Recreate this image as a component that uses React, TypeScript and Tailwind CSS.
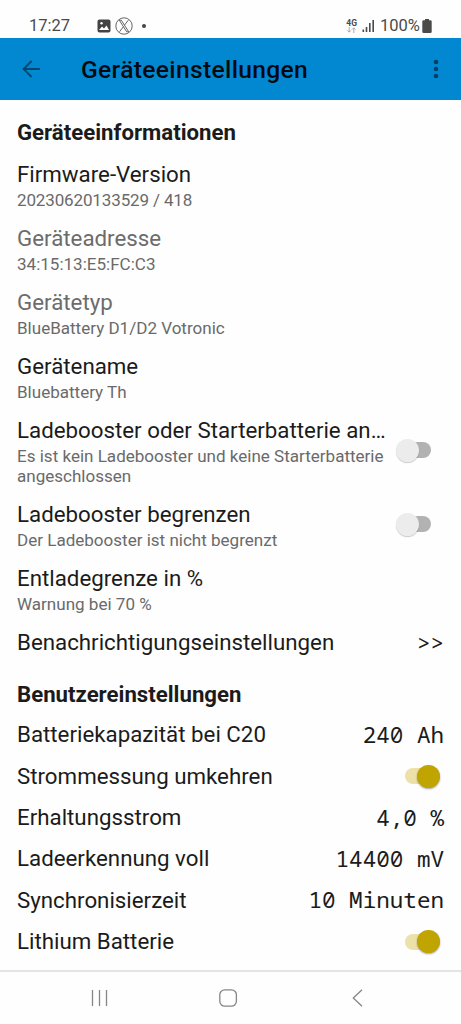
import React from "react";

type InfoItem = {
  title: string;
  summary: string;
  muted?: boolean;
  toggle?: boolean;
  tight?: boolean;
};

type UserItem = {
  title: string;
  value?: string;
};

const infoItems: InfoItem[] = [
  { title: "Firmware-Version", summary: "20230620133529 / 418", tight: true },
  { title: "Geräteadresse", summary: "34:15:13:E5:FC:C3", muted: true },
  { title: "Gerätetyp", summary: "BlueBattery D1/D2 Votronic", muted: true },
  { title: "Gerätename", summary: "Bluebattery Th" },
  {
    title: "Ladebooster oder Starterbatterie an…",
    summary: "Es ist kein Ladebooster und keine Starterbatterie angeschlossen",
    toggle: true,
  },
  { title: "Ladebooster begrenzen", summary: "Der Ladebooster ist nicht begrenzt", toggle: true },
  { title: "Entladegrenze in %", summary: "Warnung bei 70 %" },
];

const userItems: UserItem[] = [
  { title: "Batteriekapazität bei C20", value: "240 Ah" },
  { title: "Strommessung umkehren" },
  { title: "Erhaltungsstrom", value: "4,0 %" },
  { title: "Ladeerkennung voll", value: "14400 mV" },
  { title: "Synchronisierzeit", value: "10 Minuten" },
  { title: "Lithium Batterie" },
];

function Switch({ on = false }: { on?: boolean }) {
  return (
    <div
      role="switch"
      aria-checked={on}
      className={`flex h-4 w-[35px] shrink-0 items-center rounded-full ${
        on ? "justify-end bg-[#ece2a9]" : "bg-linear-to-r from-transparent from-30% to-[#b2b2b2] to-30%"
      }`}
    >
      <div
        className={`size-[23px] shrink-0 rounded-full ${
          on ? "bg-[#c0a400] shadow-[0_1px_2px_rgba(0,0,0,0.35)]" : "bg-[#ececec] shadow-[0_1px_1px_rgba(0,0,0,0.2)]"
        }`}
      />
    </div>
  );
}

function Value({ children }: { children: React.ReactNode }) {
  return (
    <span className="font-['Droid_Sans_Mono','Noto_Sans_Mono','DejaVu_Sans_Mono',monospace] text-[22.6px]">
      {children}
    </span>
  );
}

function StatusBar() {
  return (
    <div className="flex h-[38px] items-end justify-between pr-[28px] pb-[2px] pl-[29px] text-[#4a4a4a]">
      <div className="flex h-5 items-center">
        <span className="w-[68px] text-[16.5px]">17:27</span>
        <svg width="14" height="14" viewBox="0 0 14 14">
          <rect x="0.5" y="0.5" width="13" height="13" rx="2" fill="#444" />
          <path d="M2 11l3-3.5 2 2 2.5-3L12 11z" fill="#fff" />
          <circle cx="4.5" cy="4.2" r="1.2" fill="#fff" />
        </svg>
        <svg className="ml-[4px]" width="18" height="18" viewBox="0 0 18 18" fill="none" stroke="#555" strokeWidth="0.9">
          <circle cx="9" cy="9" r="8.2" />
          <path d="M4.3 3.2h2l7.4 11.6h-2zM13.3 3.2L9.6 8M8.3 9.8l-3.8 5" />
        </svg>
        <span className="ml-[9px] size-1 rounded-full bg-[#444]" />
      </div>
      <div className="flex h-5 items-center">
        <div className="flex flex-col items-center">
          <span className="text-[8.5px] leading-[8px] font-bold">4G</span>
          <svg width="9" height="6" viewBox="0 0 9 6" fill="none" stroke="#999" strokeWidth="0.8">
            <path d="M2.2 0v5M0.5 3.4l1.7 1.8 1.7-1.8M6.8 6V1M5.1 2.6L6.8 0.8l1.7 1.8" />
          </svg>
        </div>
        <svg className="ml-[5px]" width="13" height="14" viewBox="0 0 13 14" fill="#4a4a4a">
          <rect x="0.5" y="10.5" width="1.6" height="2.5" />
          <rect x="3.7" y="8" width="1.6" height="5" />
          <rect x="7" y="4" width="1.6" height="9" />
          <rect x="10.4" y="1" width="1.6" height="12" />
        </svg>
        <span className="ml-[5px] w-[42px] text-[16.5px] whitespace-nowrap">100%</span>
        <svg className="mr-px" width="10" height="14" viewBox="0 0 10 14" fill="#4a4a4a">
          <path d="M3 0h4v1.3h1.4Q9.7 1.3 9.7 2.6v9.9Q9.7 14 8.4 14H1.6Q.3 14 .3 12.5V2.6Q.3 1.3 1.6 1.3H3z" />
        </svg>
      </div>
    </div>
  );
}

function AppBar() {
  return (
    <header className="flex h-[62px] items-center bg-[#0288d1] pr-[22px] pl-[22px]">
      <svg width="19" height="18" viewBox="0 0 19 18" fill="none" stroke="#014a72" strokeWidth="1.9">
        <path d="M18 9H2M9.6 1L1.6 9l8 8" />
      </svg>
      <h1 className="ml-[40px] flex-1 pt-[2px] text-[24.6px] font-medium tracking-[0.34px] text-[#020a10]">
        Geräteeinstellungen
      </h1>
      <svg width="6" height="20" viewBox="0 0 6 20" fill="#014168">
        <circle cx="3" cy="3" r="2.3" />
        <circle cx="3" cy="10" r="2.3" />
        <circle cx="3" cy="17" r="2.3" />
      </svg>
    </header>
  );
}

function NavBar() {
  return (
    <nav className="flex h-[54px] items-center border-t-2 border-[#e4e4e4] pl-[91px]">
      <svg width="17" height="18" viewBox="0 0 17 18" stroke="#858585" strokeWidth="1.3">
        <path d="M1.5 1v16M8.5 1v16M15.5 1v16" />
      </svg>
      <svg className="ml-[110px]" width="20" height="18" viewBox="0 0 20 18" fill="none" stroke="#858585" strokeWidth="1.3">
        <rect x="1.8" y="0.8" width="16.6" height="16.4" rx="5" />
      </svg>
      <svg className="ml-[114px]" width="11" height="18" viewBox="0 0 11 18" fill="none" stroke="#858585" strokeWidth="1.3">
        <path d="M10 0.8L1.3 9l8.7 8.2" />
      </svg>
    </nav>
  );
}

export default function App() {
  return (
    <div className="flex h-[1024px] w-[461px] flex-col overflow-hidden bg-[#fefefe] font-['Roboto',sans-serif] text-[#1b1b1b]">
      <StatusBar />
      <AppBar />

      <main className="flex-1 px-[17px]">
        <h2 className="flex h-[52px] items-center pt-[13px] text-[22.2px] font-bold">Geräteeinformationen</h2>

        {infoItems.map((item) => (
          <div key={item.title} className="flex items-center justify-between py-[6px]">
            <div className={item.toggle ? "w-[372px]" : "w-full"}>
              <div className={`text-[22.3px] leading-8 whitespace-nowrap ${item.muted ? "text-[#6c6c6c]" : ""}`}>
                {item.title}
              </div>
              <div className={`text-[17.05px] leading-5 text-[#6a6a6a] ${item.tight ? "tracking-[-0.15px]" : ""}`}>
                {item.summary}
              </div>
            </div>
            {item.toggle && (
              <div className="mr-[13px]">
                <Switch />
              </div>
            )}
          </div>
        ))}

        <div className="flex h-[44px] items-center justify-between pt-px text-[22.3px]">
          <span>Benachrichtigungseinstellungen</span>
          <Value>&gt;&gt;</Value>
        </div>

        <h2 className="flex h-[50px] items-center pt-[11px] text-[22.2px] font-bold">Benutzereinstellungen</h2>

        {userItems.map((item) => (
          <div key={item.title} className="flex h-[41.3px] items-center justify-between pt-px text-[22.3px]">
            <span>{item.title}</span>
            {item.value ? (
              <Value>{item.value}</Value>
            ) : (
              <div className="mr-[4px]">
                <Switch on />
              </div>
            )}
          </div>
        ))}
      </main>

      <NavBar />
    </div>
  );
}
